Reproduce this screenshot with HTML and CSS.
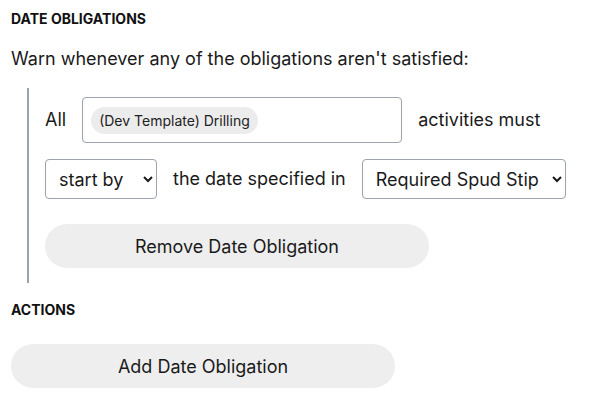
FILE: index.html
```html
<!DOCTYPE html>
<html>
<head>
<meta charset="utf-8">
<link rel="stylesheet" href="styles.css">
</head>
<body>
<div class="page">
  <h3 class="section-title">DATE OBLIGATIONS</h3>
  <p class="intro">Warn whenever any of the obligations aren't satisfied:</p>
  <div class="obligation">
    <div class="row">
      <span class="label">All</span>
      <div class="multi">
        <span class="chip">(Dev Template) Drilling</span>
      </div>
      <span class="label">activities must</span>
    </div>
    <div class="row">
      <select class="sel sel-start"><option>start by</option></select>
      <span class="label">the date specified in</span>
      <select class="sel sel-field"><option>Required Spud Stip</option></select>
    </div>
    <button class="pill remove">Remove Date Obligation</button>
  </div>
  <h3 class="section-title actions">ACTIONS</h3>
  <button class="pill add">Add Date Obligation</button>
</div>
</body>
</html>
```
FILE: styles.css
```css
* { box-sizing: border-box; }
html, body { margin: 0; background: #fff; }
body { font-family: Inter, "Noto Sans", sans-serif; color: #1a1a1a; }
.page { padding: 11px 11px; }
.section-title {
  margin: 0;
  font-size: 14px;
  font-weight: 700;
  line-height: 16px;
  color: #111;
}
.intro {
  margin: 20px 0 0 0;
  font-size: 18px;
  line-height: 24px;
}
.obligation {
  margin: 17px 0 0 16px;
  border-left: 2px solid #9ca3af;
  padding: 9px 0 15px 16px;
  display: flex;
  flex-direction: column;
  align-items: flex-start;
}
.row {
  display: flex;
  align-items: center;
  gap: 16px;
}
.row + .row { margin-top: 16px; }
.label { font-size: 18px; line-height: 24px; white-space: nowrap; }
.multi {
  width: 320px;
  height: 46px;
  border: 1px solid #9ca3af;
  border-radius: 4px;
  padding: 0 8px;
  display: flex;
  align-items: center;
}
.chip {
  background: #ececec;
  border-radius: 14px;
  padding: 0 8px;
  height: 27px;
  line-height: 27px;
  font-size: 14px;
  color: #222;
}
.sel {
  font-family: Inter, "Noto Sans", sans-serif;
  font-size: 18px;
  height: 40px;
  border: 1px solid #9ca3af;
  border-radius: 4px;
  background: #fff;
  color: #1a1a1a;
  padding: 0 4px 0 9px;
}
.sel-start { width: 112px; }
.sel-field { width: 204px; }
.pill {
  font-family: Inter, "Noto Sans", sans-serif;
  font-size: 18px;
  color: #1a1a1a;
  background: #eeeeee;
  border: none;
  border-radius: 22px;
  height: 44px;
  width: 384px;
  cursor: pointer;
}
.remove { margin-top: 25px; }
.actions { margin-top: 19px; }
.add { margin-top: 26px; }
```
